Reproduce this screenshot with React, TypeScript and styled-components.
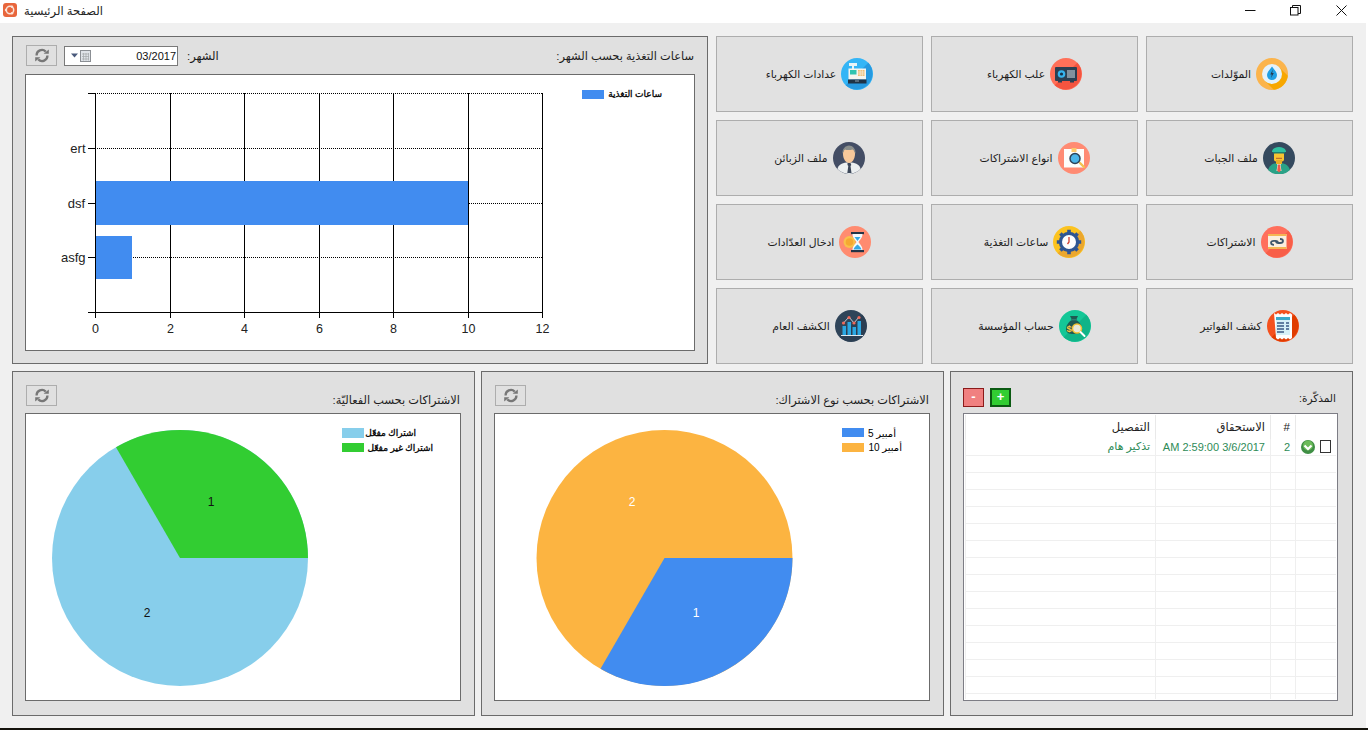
import React from "react";
import styled, { createGlobalStyle } from "styled-components";

const FONT = `"Liberation Sans", "DejaVu Sans", "Noto Sans", sans-serif`;

const Global = createGlobalStyle`
  html, body { margin: 0; padding: 0; background: #fff; overflow: hidden; }
  #root { width: 1368px; height: 730px; }
  * { box-sizing: border-box; }
`;

const Screen = styled.div`
  width: 1368px;
  height: 730px;
  background: #fff;
  display: flex;
  flex-direction: column;
  font-family: ${FONT};
`;
const Window = styled.div`
  width: 1366px;
  height: 728px;
  display: flex;
  flex-direction: column;
  background: #f0f0f0;
`;
const Desktop = styled.div`
  height: 2px;
  background: #15130c;
`;
const TitleBar = styled.header`
  height: 23px;
  flex: none;
  background: #fff;
  display: flex;
  align-items: center;
  padding-left: 3px;
  gap: 7px;
`;
const TitleText = styled.span`
  font-size: 11.5px;
  color: #222;
  flex: 1;
  position: relative;
  top: -1px;
  direction: rtl;
  text-align: left;
`;
const WinButtons = styled.div`
  display: flex;
  width: 136.5px;
  height: 23px;
  margin-right: 2px;
`;
const WinButton = styled.div`
  width: 45.5px;
  display: flex;
  align-items: center;
  justify-content: center;
  padding-bottom: 3px;
`;
const Content = styled.main`
  flex: 1;
  min-height: 0;
  display: flex;
  flex-direction: column;
  gap: 7px;
  padding: 13px 13px 12px 12px;
`;
const TopRow = styled.section`
  display: flex;
  gap: 8px;
  height: 328px;
  flex: none;
`;
const BottomRow = styled.section`
  display: grid;
  grid-template-columns: 463px 463px 403px;
  grid-template-rows: 345px;
  gap: 6px;
  height: 345px;
  flex: none;
`;
const Panel = styled.div<{ $pad: string; $wide?: boolean }>`
  background: #e0e0e0;
  border: 1px solid #6b6b6b;
  padding: ${(p) => p.$pad};
  display: flex;
  flex-direction: column;
  min-height: 0;
  ${(p) => (p.$wide ? "width: 696px; flex: none;" : "")}
`;
const PanelHead = styled.div<{ $top?: boolean }>`
  display: flex;
  height: ${(p) => (p.$top ? 29 : 28)}px;
  flex: none;
  align-items: ${(p) => (p.$top ? "flex-start" : "flex-end")};
  padding-bottom: ${(p) => (p.$top ? 0 : 6)}px;
  padding-right: 1px;
`;
const Refresh = styled.button`
  width: 31px;
  height: 21px;
  margin-left: 1px;
  padding: 0;
  background: #e0e0e0;
  border: 1px solid #adadad;
  display: flex;
  align-items: center;
  justify-content: center;
  align-self: flex-start;
`;
const Heading = styled.div<{ $top?: boolean }>`
  margin-left: auto;
  font-size: 11.4px;
  line-height: ${(p) => (p.$top ? "22px" : "14px")};
  color: #1c1c1c;
  direction: rtl;
  white-space: nowrap;
`;
const DateBox = styled.div`
  width: 114px;
  height: 20px;
  margin: 1px 0 0 7px;
  background: #fff;
  border: 1px solid #7a7a7a;
  display: flex;
  align-items: center;
  padding: 0 0 0 6px;
  font-size: 11px;
  color: #111;
`;
const DateValue = styled.span`
  margin-left: auto;
  margin-right: 1px;
`;
const MonthLabel = styled.div`
  margin-left: 9px;
  font-size: 11.5px;
  line-height: 23px;
  color: #1c1c1c;
  direction: rtl;
`;
const ChartBox = styled.div`
  flex: 1;
  background: #fff;
  border: 1px solid #6b6b6b;
  min-height: 0;
  overflow: hidden;
`;
const ChartSvg = styled.svg`
  display: block;
  width: 100%;
  height: 100%;
  font-family: ${FONT};
`;
const Tiles = styled.div`
  flex: 1;
  display: grid;
  grid-template-columns: repeat(3, 207px);
  grid-template-rows: repeat(4, 76px);
  gap: 8px;
`;
const Tile = styled.button`
  background: #e1e1e1;
  border: 1px solid #adadad;
  padding: 0;
  display: flex;
  align-items: center;
  justify-content: center;
  gap: 5px;
  font-family: ${FONT};
  font-size: 10.8px;
  color: #1c1c1c;
  direction: ltr;
`;
const TileLabel = styled.span`
  direction: rtl;
  white-space: nowrap;
`;
const MemoHead = styled.div`
  display: flex;
  height: 28px;
  flex: none;
  align-items: flex-start;
  gap: 6px;
`;
const MemoTitle = styled.div`
  margin-left: auto;
  margin-top: 6px;
  margin-right: 2px;
  font-size: 10.5px;
  line-height: 14px;
  color: #1c1c1c;
  direction: rtl;
`;
const SmallBtn = styled.button<{ $bg: string; $line: string; $w: number }>`
  width: 21px;
  height: 19px;
  margin-top: 3px;
  padding: 0 0 1px;
  background: ${(p) => p.$bg};
  border: ${(p) => p.$w}px solid ${(p) => p.$line};
  color: #fff;
  font: bold 13px ${FONT};
  line-height: 14px;
  display: flex;
  align-items: center;
  justify-content: center;
`;
const GridBox = styled.div`
  flex: 1;
  min-height: 0;
  background: #fff;
  border: 1px solid #7d7d85;
  padding: 1px;
`;
const GridClip = styled.div`
  height: 100%;
  overflow: hidden;
`;
const GridTable = styled.table`
  direction: rtl;
  border-collapse: separate;
  border-spacing: 0;
  table-layout: fixed;
  width: 371px;
  font-size: 11.5px;
`;
const HeadCell = styled.th<{ $w: number }>`
  width: ${(p) => p.$w}px;
  height: 24px;
  font-weight: normal;
  color: #1c1c1c;
  text-align: right;
  padding: 0 5px;
  border-left: 1px solid #e9e9e9;
`;
const Cell = styled.td`
  height: 17px;
  padding: 0 5px 1px;
  color: #2e8b57;
  text-align: right;
  white-space: nowrap;
  border-left: 1px solid #efefef;
  border-bottom: 1px solid #efefef;
  font-size: 11px;
`;
const RowMarks = styled.div`
  display: flex;
  align-items: center;
  gap: 5px;
`;
const CheckBox = styled.span`
  display: block;
  width: 13px;
  height: 13px;
  background: #fff;
  border: 1px solid #333;
`;

const C = ({ fill, shadow, children }: { fill: string; shadow?: string; children?: React.ReactNode }) => (
  <svg width="32" height="32" viewBox="0 0 32 32" style={{ flex: "none" }}>
    <circle cx="16" cy="16" r="16" fill={fill} />
    {shadow ? <path d="M27.3 4.7A16 16 0 0 1 4.7 27.3Z" fill={shadow} /> : null}
    {children}
  </svg>
);

const Drop = () => (
  <C fill="#fbb44c">
    <path d="M23 9L31.800 17.800A16 16 0 0 1 17.800 31.800L9 23Z" fill="#f7a700" />
    <circle cx="16" cy="16" r="10" fill="#e4f2fb" />
    <path d="M16 8.500c3 4 5 6 5 8.600a5 5 0 0 1-10 0c0-2.600 2-4.600 5-8.600Z" fill="#1f9fe3" />
    <path d="M16.800 11.500l-2.500 5h1.500l-.8 3.500 2.800-5h-1.600Z" fill="#263a4d" />
  </C>
);
const Safe = () => (
  <C fill="#ff7059" shadow="#f4543f">
    <rect x="5" y="9" width="22" height="14" rx="1" fill="#2b3f52" />
    <rect x="8" y="23" width="4" height="1.500" fill="#2b3f52" />
    <rect x="20" y="23" width="4" height="1.500" fill="#2b3f52" />
    <circle cx="11.500" cy="16" r="3.800" fill="#35b4ef" />
    <circle cx="11.500" cy="16" r="1.600" fill="#17324a" />
    <path d="M18 12v8M20 12v8M22 12v8M24 12v8" stroke="#bcc8d0" strokeWidth="1.200" />
  </C>
);
const Register = () => (
  <C fill="#34b5f6" shadow="#2699e0">
    <rect x="8" y="5" width="8" height="3" fill="#e9f4f7" />
    <rect x="11" y="8" width="2" height="3" fill="#e9f4f7" />
    <rect x="7.500" y="10.500" width="17.500" height="11" fill="#f5f5ef" />
    <rect x="9" y="12" width="6.500" height="4.500" fill="#2fc4b0" />
    <path d="M17 12h6.500v6H17Z" fill="#eebd74" />
    <path d="M19.200 12v6M21.300 12v6M17 14h6.500M17 16h6.500" stroke="#f5f5ef" strokeWidth=".6" />
    <rect x="7" y="21.500" width="18.500" height="4" fill="#1f3346" />
    <rect x="14" y="22.500" width="4" height="1" fill="#8fa2b0" />
  </C>
);
const Guard = () => (
  <C fill="#34495e">
    <path d="M5 28c2-6 6-7 11-7s9 1 11 7a16 16 0 0 1-22 0Z" fill="#2aa287" />
    <path d="M13.500 21h5l-1 2 1 6h-5l1-6Z" fill="#fdf2dc" />
    <path d="M15 22.500h2l.8 6-1.800 2-1.800-2Z" fill="#ef5a4c" />
    <rect x="11" y="10" width="10" height="9.500" rx="2" fill="#f7c331" />
    <rect x="13" y="18" width="6" height="4" fill="#e9ac26" />
    <path d="M9 9c1-3 4-4 7-4s6 1 7 4v1H9Z" fill="#2fc0a0" />
    <rect x="10" y="10" width="12" height="1.500" fill="#1c7f6e" />
    <rect x="13" y="15.800" width="6" height="1" fill="#b35d2a" />
  </C>
);
const SearchDoc = () => (
  <C fill="#ff8b73">
    <rect x="6" y="7" width="20" height="18.500" fill="#fdfdfb" />
    <rect x="13.500" y="6" width="5" height="4" fill="#fbc86a" />
    <path d="M22 21l4 4" stroke="#f3c24e" strokeWidth="2.400" strokeLinecap="round" />
    <circle cx="17" cy="16.500" r="5" fill="#4ab4e8" stroke="#2c4257" strokeWidth="1.500" />
  </C>
);
const Customer = () => (
  <C fill="#434d64">
    <path d="M4.500 27c1-4 4-6 9-6.500h5c5 .5 8 2.500 9 6.500a16 16 0 0 1-23 0Z" fill="#eceff0" />
    <path d="M14.500 21h3l.8 2-.8 1 1 7h-4.200l1-7-.8-1Z" fill="#3c4658" />
    <path d="M10 12c0-4 2.500-7 6-7s6 3 6 7c0 5-3 9-6 9s-6-4-6-9Z" fill="#f7c89a" />
    <path d="M9.500 12c-.5-5 3-8.500 6.500-8.500s7 3 6.500 8.500c-1-3-2-4-3-4.500-2 .8-6 .8-7.500 0-1 1-2 2-2.500 4.500Z" fill="#8a8e8b" />
  </C>
);
const Ticket = () => (
  <C fill="#ff6f5c" shadow="#f85e48">
    <rect x="7" y="8" width="18.500" height="15" fill="#fbeede" />
    <rect x="7" y="8" width="18.500" height="2" fill="#f5b553" />
    <rect x="7" y="21" width="18.500" height="2" fill="#f5b553" />
    <path d="M13 18.800c-2 0-3-1-3-2s1-2 3-2h1.500c1.500 0 2.500 1 2.500 2M19 13c2 0 3 1 3 2s-1 2-3 2h-1.500c-1.500 0-2.500-1-2.500-2" fill="none" stroke="#3f566b" strokeWidth="1.800" />
  </C>
);
const GearClock = () => (
  <C fill="#fcc31f" shadow="#eba72e">
    <circle cx="16" cy="16" r="10.200" fill="#2e5593" />
    <path d="M16 3.800v24.400M3.800 16h24.400M7.400 7.400l17.200 17.200M24.600 7.400L7.400 24.600" stroke="#2e5593" strokeWidth="3.600" />
    <circle cx="16" cy="16" r="7" fill="#fdfdfd" />
    <path d="M16 11v5l-1.500 2" stroke="#d03d2f" strokeWidth="1.300" fill="none" />
  </C>
);
const Hourglass = () => (
  <C fill="#ff8b70">
    <circle cx="10.500" cy="16" r="6" fill="#f9c04a" />
    <circle cx="10.500" cy="16" r="3.800" fill="#f5a832" />
    <rect x="12" y="6" width="13" height="2.200" fill="#243548" />
    <rect x="12" y="24" width="13" height="2.200" fill="#243548" />
    <path d="M13.500 8h10c0 4-3 6-4 8 1 2 4 4 4 8h-10c0-4 3-6 4-8-1-2-4-4-4-8Z" fill="#f4fafc" />
    <path d="M15.500 11h6l-3 4ZM14.500 23.500c.5-2 2.500-4 4-5 1.500 1 3.500 3 4 5Z" fill="#36a8e4" />
  </C>
);
const Invoice = () => (
  <C fill="#f4511e" shadow="#e03c00">
    <path d="M7 3l2 1.500 2-1.500 2 1.500 2-1.500 2 1.500 2-1.500 2 1.500 2-1.500 2 1.500V28l-2 1.500-2-1.500-2 1.500-2-1.500-2 1.500-2-1.500-2 1.500-2-1.500Z" fill="#fdfdfd" />
    <rect x="9" y="7" width="14" height="18" fill="#d5f0f7" />
    <rect x="9" y="7" width="14" height="3" fill="#3ba9c9" />
    <path d="M10 13h7M10 16h7M10 19h7M10 22h7M19 13h3M19 16h3M19 19h3" stroke="#3b5a85" strokeWidth="1.500" />
  </C>
);
const MoneyBag = () => (
  <C fill="#14c797" shadow="#10b488">
    <path d="M11 6h8l-2 4c4 2 6 6 6 9 0 4-3 5-8 5s-8-1-8-5c0-3 2-7 6-9Z" fill="#1f5a52" />
    <rect x="12" y="9" width="6" height="1.500" fill="#2c7d6f" />
    <text x="7.500" y="22" fontSize="9.500" fontWeight="bold" fill="#f5c842" fontFamily="Liberation Sans, sans-serif">$</text>
    <circle cx="18" cy="18.500" r="4.500" fill="#e9e9d8" stroke="#f1c232" strokeWidth="1.500" />
    <path d="M21.500 22l4 4" stroke="#fff" strokeWidth="2" strokeLinecap="round" />
  </C>
);
const Stats = () => (
  <C fill="#2f4459" shadow="#2b3e52">
    <rect x="7.500" y="16" width="3.500" height="9" fill="#2aa7e2" />
    <rect x="12.500" y="12" width="3.500" height="13" fill="#2aa7e2" />
    <rect x="17.500" y="17" width="3.500" height="8" fill="#2aa7e2" />
    <rect x="22.500" y="11" width="3.500" height="14" fill="#2aa7e2" />
    <rect x="6" y="25" width="22" height="1" fill="#dfe8ee" />
    <path d="M8.500 13l5.500-6 5 6 5-6" fill="none" stroke="#e8ecef" strokeWidth=".8" />
    <circle cx="8.500" cy="13" r="1.600" fill="#ef6a5a" />
    <circle cx="14" cy="7.500" r="1.600" fill="#ef6a5a" />
    <circle cx="19" cy="13" r="1.600" fill="#ef6a5a" />
    <circle cx="24" cy="7.500" r="1.600" fill="#ef6a5a" />
  </C>
);

const RefreshIcon = () => (
  <svg width="16" height="15" viewBox="0 0 16 15" fill="none">
    <path d="M2.600 7.500A5.300 5.300 0 0 1 11.700 3.600" stroke="#777" strokeWidth="2.300" />
    <path d="M9.600 5.500H14.800V1.200Z" fill="#777" transform="translate(0 0.300)" />
    <path d="M13.400 7.500A5.300 5.300 0 0 1 4.300 11.400" stroke="#777" strokeWidth="2.300" />
    <path d="M6.400 9.500H1.200V13.800Z" fill="#777" transform="translate(0 -0.300)" />
  </svg>
);

const tiles: { label: string; icon: React.ReactNode }[] = [
  { label: "عدادات الكهرباء", icon: <Register /> },
  { label: "علب الكهرباء", icon: <Safe /> },
  { label: "الموّلدات", icon: <Drop /> },
  { label: "ملف الزبائن", icon: <Customer /> },
  { label: "انواع الاشتراكات", icon: <SearchDoc /> },
  { label: "ملف الجبات", icon: <Guard /> },
  { label: "ادخال العدّادات", icon: <Hourglass /> },
  { label: "ساعات التغذية", icon: <GearClock /> },
  { label: "الاشتراكات", icon: <Ticket /> },
  { label: "الكشف العام", icon: <Stats /> },
  { label: "حساب المؤسسة", icon: <MoneyBag /> },
  { label: "كشف الفواتير", icon: <Invoice /> },
];

const gx = [95.5, 170.5, 244.5, 319.5, 393.5, 468.5, 542.5];
const gy = [93.5, 148.5, 203.5, 257.5, 312.5];
const legendInk = { stroke: "#000", strokeWidth: 0.3 };

const BarChart = () => (
  <ChartSvg viewBox="26 75 668 275">
    {gy.map((y) => (
      <g key={y}>
        <line x1="88" x2="95" y1={y} y2={y} stroke="#000" />
        <line x1="95" x2="543" y1={y} y2={y} stroke="#000" strokeDasharray={y === 312.5 ? undefined : "1 1"} />
      </g>
    ))}
    {gx.map((x) => (
      <line key={x} x1={x} x2={x} y1="93" y2="318" stroke="#000" />
    ))}
    <rect x="96" y="181" width="372" height="44" fill="#418cf0" />
    <rect x="96" y="236" width="36" height="43" fill="#418cf0" />
    <g fontSize="13" fill="#222" textAnchor="end">
      <text x="85.500" y="153">ert</text>
      <text x="85" y="207.500">dsf</text>
      <text x="85.500" y="262">asfg</text>
    </g>
    <g fontSize="12.500" fill="#222" textAnchor="middle">
      {[0, 2, 4, 6, 8, 10, 12].map((n, i) => (
        <text key={n} x={gx[i]} y="333">{n}</text>
      ))}
    </g>
    <rect x="582" y="90" width="22" height="9" fill="#418cf0" />
    <text x="662" y="97" fontSize="9" fill="#000" direction="rtl" textAnchor="start" {...legendInk}>ساعات التغذية</text>
  </ChartSvg>
);

const ActivityPie = () => (
  <ChartSvg viewBox="26 414 434 286">
    <circle cx="180" cy="558" r="128" fill="#87ceeb" />
    <path d="M180 558L116 447.150A128 128 0 0 1 308 558Z" fill="#32cd32" />
    <text x="211" y="506" fontSize="12" fill="#111" textAnchor="middle">1</text>
    <text x="147" y="617" fontSize="12" fill="#111" textAnchor="middle">2</text>
    <rect x="342" y="428" width="22" height="10" fill="#87ceeb" />
    <rect x="342" y="443" width="22" height="9" fill="#32cd32" />
    <g fontSize="9" fill="#000" direction="rtl" textAnchor="start" {...legendInk}>
      <text x="416" y="436">اشتراك مفعّل</text>
      <text x="433" y="451">اشتراك غير مفعّل</text>
    </g>
  </ChartSvg>
);

const TypePie = () => (
  <ChartSvg viewBox="495 414 434 286">
    <circle cx="664.500" cy="558" r="128" fill="#fcb441" />
    <path d="M664.500 558L792.500 558A128 128 0 0 1 600.500 668.850Z" fill="#418cf0" />
    <text x="632" y="506" fontSize="12" fill="#fff" textAnchor="middle">2</text>
    <text x="696" y="617" fontSize="12" fill="#fff" textAnchor="middle">1</text>
    <rect x="842" y="428" width="22" height="9" fill="#418cf0" />
    <rect x="842" y="443" width="22" height="9" fill="#fcb441" />
    <g fontSize="10" fill="#000" direction="rtl" textAnchor="start">
      <text x="896" y="437">أمبير 5</text>
      <text x="902" y="451">أمبير 10</text>
    </g>
  </ChartSvg>
);

export default function App() {
  return (
    <Screen>
      <Global />
      <Window>
        <TitleBar>
          <svg width="14" height="14" viewBox="0 0 14 14" style={{ flex: "none", marginBottom: 3 }}>
            <rect width="14" height="14" rx="3" fill="#e8663c" />
            <circle cx="7" cy="7" r="3.700" fill="none" stroke="#fbe3d8" strokeWidth="1.500" />
            <circle cx="3" cy="7" r="1.200" fill="#fbe3d8" />
            <circle cx="9" cy="3.700" r="1.200" fill="#fbe3d8" />
            <circle cx="9" cy="10.300" r="1.200" fill="#fbe3d8" />
          </svg>
          <TitleText>الصفحة الرئيسية</TitleText>
          <WinButtons>
            <WinButton>
              <svg width="11" height="11" viewBox="0 0 11 11"><path d="M0 5.500H10.500" stroke="#111" /></svg>
            </WinButton>
            <WinButton>
              <svg width="11" height="11" viewBox="0 0 11 11" fill="none">
                <rect x=".5" y="2.500" width="7.500" height="7.500" stroke="#111" />
                <path d="M2.500 2.500V.5H10.500V8.500H8" stroke="#111" />
              </svg>
            </WinButton>
            <WinButton>
              <svg width="11" height="11" viewBox="0 0 11 11"><path d="M.5.5L10.500 10.500M10.500.5L.5 10.500" stroke="#111" /></svg>
            </WinButton>
          </WinButtons>
        </TitleBar>
        <Content>
          <TopRow>
            <Panel $wide $pad="8px 12px 12px 12px">
              <PanelHead $top>
                <Refresh><RefreshIcon /></Refresh>
                <DateBox>
                  <svg width="21" height="14" viewBox="0 0 21 14" style={{ flex: "none" }}>
                    <path d="M0 4.500H7L3.500 8.500Z" fill="#4a5a7c" />
                    <rect x="9.500" y="1.500" width="10" height="11" fill="#dfe3e8" stroke="#8b8f94" />
                    <path d="M11 5h7M11 7.500h7M11 10h7M12.500 4v7.500M15 4v7.500M17.500 4v7.500" stroke="#a3a7ab" strokeWidth=".7" />
                  </svg>
                  <DateValue>03/2017</DateValue>
                </DateBox>
                <MonthLabel>الشهر:</MonthLabel>
                <Heading $top>ساعات التغذية بحسب الشهر:</Heading>
              </PanelHead>
              <ChartBox><BarChart /></ChartBox>
            </Panel>
            <Tiles>
              {tiles.map((t) => (
                <Tile key={t.label}>
                  <TileLabel>{t.label}</TileLabel>
                  {t.icon}
                </Tile>
              ))}
            </Tiles>
          </TopRow>
          <BottomRow>
            <Panel $pad="13px 13px 14px 12px">
              <PanelHead>
                <Refresh><RefreshIcon /></Refresh>
                <Heading>الاشتراكات بحسب الفعاليّة:</Heading>
              </PanelHead>
              <ChartBox><ActivityPie /></ChartBox>
            </Panel>
            <Panel $pad="13px 13px 14px 12px">
              <PanelHead>
                <Refresh><RefreshIcon /></Refresh>
                <Heading>الاشتراكات بحسب نوع الاشتراك:</Heading>
              </PanelHead>
              <ChartBox><TypePie /></ChartBox>
            </Panel>
            <Panel $pad="13px 14px 14px 12px">
              <MemoHead>
                <SmallBtn $bg="#f08080" $line="#8b1a1a" $w={1}>-</SmallBtn>
                <SmallBtn $bg="#32cd32" $line="#0b5a12" $w={2}>+</SmallBtn>
                <MemoTitle>المذكّرة:</MemoTitle>
              </MemoHead>
              <GridBox>
                <GridClip>
                  <GridTable>
                    <thead>
                      <tr>
                        <HeadCell $w={41} />
                        <HeadCell $w={25}>#</HeadCell>
                        <HeadCell $w={115}>الاستحقاق</HeadCell>
                        <HeadCell $w={190}>التفصيل</HeadCell>
                      </tr>
                    </thead>
                    <tbody>
                      <tr>
                        <Cell>
                          <RowMarks>
                            <CheckBox />
                            <svg width="14" height="14" viewBox="0 0 14 14" style={{ flex: "none" }}>
                              <circle cx="7" cy="7" r="7" fill="#3f8f45" />
                              <circle cx="7" cy="5.500" r="5" fill="#6dbb5a" />
                              <path d="M3.500 5.500L7 9L10.500 5.500" fill="none" stroke="#fff" strokeWidth="2.200" />
                            </svg>
                          </RowMarks>
                        </Cell>
                        <Cell>2</Cell>
                        <Cell>3/6/2017 2:59:00 AM</Cell>
                        <Cell>تذكير هام</Cell>
                      </tr>
                      {Array.from({ length: 15 }, (_, i) => (
                        <tr key={i}>
                          <Cell />
                          <Cell />
                          <Cell />
                          <Cell />
                        </tr>
                      ))}
                    </tbody>
                  </GridTable>
                </GridClip>
              </GridBox>
            </Panel>
          </BottomRow>
        </Content>
      </Window>
      <Desktop />
    </Screen>
  );
}
